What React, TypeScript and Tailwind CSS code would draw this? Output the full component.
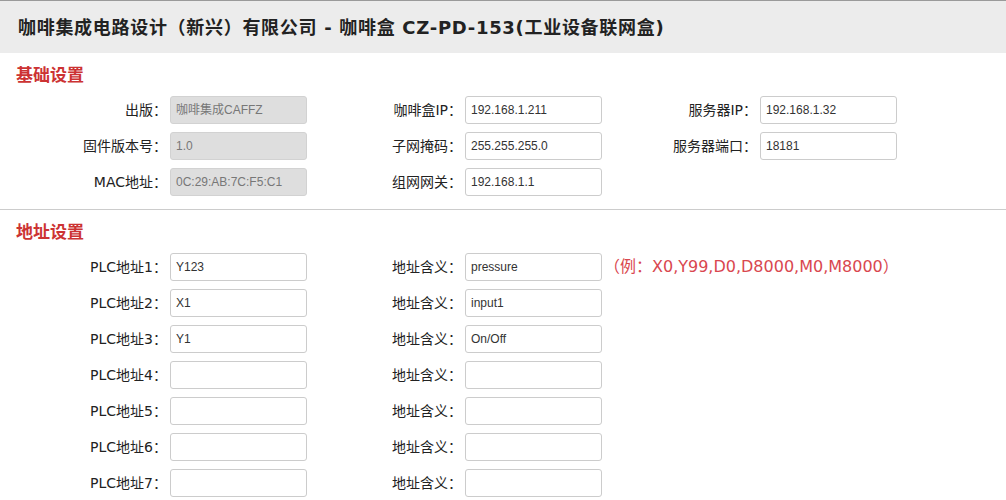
import React from "react";

const cjk = '"Noto Sans CJK SC", "Liberation Sans", sans-serif';
const lab = '"DejaVu Sans", "Noto Sans CJK SC", sans-serif';

function Field({
  label,
  value,
  labelW,
  disabled,
}: {
  label: string;
  value?: string;
  labelW: string;
  disabled?: boolean;
}) {
  return (
    <div className="flex items-center h-[28px]">
      <div className={`${labelW} text-right text-[14px] text-[#222] pr-[3px] whitespace-nowrap`} style={{ fontFamily: lab }}>
        {label}：
      </div>
      <div
        className={`w-[137px] h-[28px] rounded-[3px] border flex items-center pl-[5px] text-[12px] ${
          disabled ? "bg-[#dedede] border-[#d2d2d2] text-[#777]" : "bg-white border-[#cccccc] text-[#333]"
        }`}
        style={{ fontFamily: '"Liberation Sans", "Noto Sans CJK SC", sans-serif' }}
      >
        {value}
      </div>
    </div>
  );
}

function Heading({ children }: { children: React.ReactNode }) {
  return (
    <div className="pl-[16px] h-[22px] leading-[22px] text-[17px] font-bold text-[#cc3333]" style={{ fontFamily: cjk }}>
      {children}
    </div>
  );
}

export default function App() {
  const plc = [
    ["Y123", "pressure"],
    ["X1", "input1"],
    ["Y1", "On/Off"],
    ["", ""],
    ["", ""],
    ["", ""],
    ["", ""],
  ];
  return (
    <div className="w-[1006px] h-[500px] bg-white overflow-hidden">
      <div
        className="h-[53px] bg-[#ececec] border-t border-[#9a9a9a] flex items-center pl-[18px] text-[18px] tracking-[0.7px] font-bold text-[#222]"
        style={{ fontFamily: lab }}
      >
        咖啡集成电路设计（新兴）有限公司 - 咖啡盒 CZ-PD-153(工业设备联网盒)
      </div>

      <div className="pt-[10px] pb-[13px] border-b border-[#cccccc]">
        <Heading>基础设置</Heading>
        <div className="mt-[11px] flex flex-col gap-[8px]">
          <div className="flex">
            <Field label="出版" value="咖啡集成CAFFZ" labelW="w-[170px]" disabled />
            <Field label="咖啡盒IP" value="192.168.1.211" labelW="w-[158px]" />
            <Field label="服务器IP" value="192.168.1.32" labelW="w-[158px]" />
          </div>
          <div className="flex">
            <Field label="固件版本号" value="1.0" labelW="w-[170px]" disabled />
            <Field label="子网掩码" value="255.255.255.0" labelW="w-[158px]" />
            <Field label="服务器端口" value="18181" labelW="w-[158px]" />
          </div>
          <div className="flex">
            <Field label="MAC地址" value="0C:29:AB:7C:F5:C1" labelW="w-[170px]" disabled />
            <Field label="组网网关" value="192.168.1.1" labelW="w-[158px]" />
          </div>
        </div>
      </div>

      <div className="pt-[10px]">
        <Heading>地址设置</Heading>
        <div className="mt-[11px] flex flex-col gap-[8px]">
          {plc.map(([a, b], i) => (
            <div className="flex items-center" key={i}>
              <Field label={`PLC地址${i + 1}`} value={a} labelW="w-[170px]" />
              <Field label="地址含义" value={b} labelW="w-[158px]" />
              {i === 0 && (
                <div
                  className="ml-[2px] text-[16px] text-[#d9474f] whitespace-nowrap"
                  style={{ fontFamily: lab }}
                >
                  （例：X0,Y99,D0,D8000,M0,M8000）
                </div>
              )}
            </div>
          ))}
        </div>
      </div>
    </div>
  );
}
